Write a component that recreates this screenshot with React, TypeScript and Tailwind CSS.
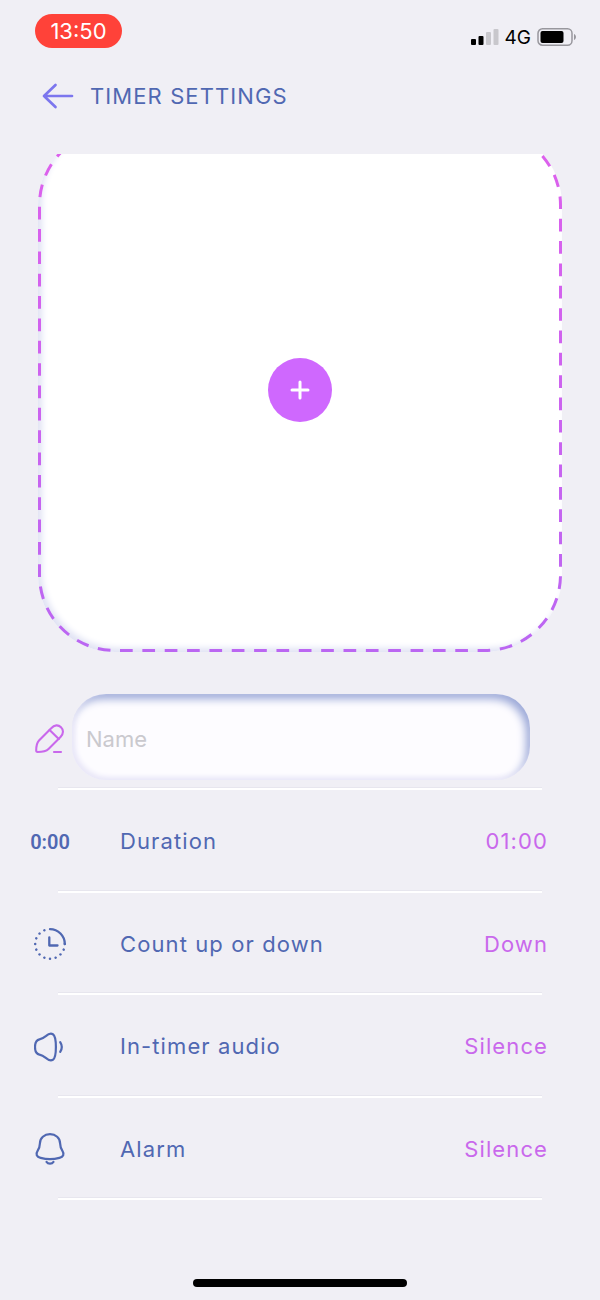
import React from 'react';

const DurationIcon = () => (
  <span className="font-['Roboto',sans-serif] text-xl font-semibold">0:00</span>
);

const CountIcon = () => (
  <svg className="size-8" viewBox="0 0 32 32" fill="none" stroke="currentColor" strokeLinecap="round">
    <path d="M16 1.2A14.8 14.8 0 0 1 30.8 16" strokeWidth="2.3" />
    <path
      d="M30.8 16A14.8 14.8 0 1 1 16 1.2"
      pathLength="120"
      strokeWidth="2.5"
      strokeDasharray="0.01 9.99"
      strokeDashoffset="-10"
    />
    <path d="M15.3 9.5v8h8.2" strokeWidth="2.3" strokeLinejoin="round" />
  </svg>
);

const AudioIcon = () => (
  <svg className="size-8" viewBox="0 0 32 32" fill="none" stroke="currentColor" strokeWidth="2.2" strokeLinecap="round">
    <path d="M5.5 8.4c2.6-.5 4.300-1.700 6.300-3.300C14 3.200 16.500 1.800 18.900 3.200c2.500 1.600 3 8.200 3 12.800s-.5 11.200-3 12.800c-2.400 1.400-4.900 0-7.100-1.900-2-1.600-3.700-2.800-6.300-3.300C1.900 22.700 1 20.500 1 16s.9-6.700 4.500-7.600Z" />
    <path d="M26.200 11.100c1.900 2.900 1.900 6.900 0 9.800" />
  </svg>
);

const AlarmIcon = () => (
  <svg className="size-8" viewBox="0 0 32 32" fill="none" stroke="currentColor" strokeWidth="2.2" strokeLinecap="round">
    <path d="M16 1.200C10.300 1.200 6 5 5.900 10.400c-.1 3.400-.6 4.700-2.200 7.200-2.400 3.700-1 6.300 2.900 7.300 5.800 1.600 13 1.600 18.800 0 3.900-1 5.300-3.600 2.900-7.300-1.600-2.500-2.100-3.800-2.200-7.200C26 5 21.700 1.200 16 1.200Z" />
    <path d="M12.500 28.900c1.500 2.300 5.500 2.300 7 0" />
  </svg>
);

const PencilIcon = () => (
  <svg
    className="size-8"
    viewBox="0 0 32 32"
    fill="none"
    stroke="currentColor"
    strokeWidth="2.1"
    strokeLinecap="round"
    strokeLinejoin="round"
  >
    <path d="M3.600 29c-1 0-1.400-.5-1.400-1.500 0-3.500.5-7.500 2.800-10L17.200 5.200c3.200-3.600 7.200-3.500 9.800-1s2.800 6.500-.5 9.800L14.500 26c-2.500 2.500-6.800 3-10.900 3Z" />
    <path d="M15.600 7l9.200 9" />
    <path d="M20 29h7" />
  </svg>
);

const settings = [
  { label: 'Duration', value: '01:00', icon: DurationIcon },
  { label: 'Count up or down', value: 'Down', icon: CountIcon },
  { label: 'In-timer audio', value: 'Silence', icon: AudioIcon },
  { label: 'Alarm', value: 'Silence', icon: AlarmIcon },
];

const StatusBar = () => (
  <div className="flex items-start justify-between pl-[35px] pr-[23px] pt-3.5">
    <div className="flex h-[34px] w-[87px] items-center justify-center rounded-full bg-[#ff4239] text-[22px] leading-none text-white">
      13:50
    </div>
    <div className="mt-[11px] flex h-6 items-center gap-1.5 text-black">
      <svg className="h-4 w-7" viewBox="0 0 28 16">
        <rect x="0" y="10" width="5" height="6" rx="1" />
        <rect x="7.5" y="7" width="5" height="9" rx="1" />
        <rect x="15" y="3" width="5" height="13" rx="1" fill="#c8c7cc" />
        <rect x="22.5" y="0" width="5" height="16" rx="1" fill="#c8c7cc" />
      </svg>
      <span className="text-[19px] leading-none">4G</span>
      <svg className="h-[18px] w-10" viewBox="0 0 40 18">
        <rect x="1" y="0.8" width="34" height="16.4" rx="4.5" fill="none" stroke="#98979d" strokeWidth="1.5" />
        <rect x="3.5" y="3" width="23" height="12" rx="2" />
        <path d="M37 6c2.600 1 2.600 5 0 6Z" fill="#98979d" />
      </svg>
    </div>
  </div>
);

const ImagePicker = () => (
  <div className="overflow-hidden px-[38px]">
    <div className="relative -mt-[26px] flex aspect-square items-center justify-center rounded-[77px] bg-white shadow-[inset_4px_-4px_6px_#e1e3f4]">
      <svg className="absolute inset-0 size-full" fill="none">
        <defs>
          <linearGradient id="dash" x1="0" y1="0" x2="0" y2="1">
            <stop offset="0" stopColor="#de60ec" />
            <stop offset="1" stopColor="#bb66f2" />
          </linearGradient>
        </defs>
        <rect
          className="h-[calc(100%-3px)] w-[calc(100%-3px)]"
          x="1.5"
          y="1.5"
          rx="75.5"
          stroke="url(#dash)"
          strokeWidth="3"
          strokeDasharray="12.7 9.65"
          strokeDashoffset="-10.45"
        />
      </svg>
      <button
        type="button"
        aria-label="Add image"
        className="relative flex size-16 items-center justify-center rounded-full bg-[#cf68fe]"
      >
        <svg className="size-5" viewBox="0 0 20 20" stroke="white" strokeWidth="3" strokeLinecap="round">
          <path d="M10 2v16M2 10h16" />
        </svg>
      </button>
    </div>
  </div>
);

const Divider = () => <div className="mx-[58px] h-[3px] border-t border-[#e7e6ee] bg-white" />;

const App = () => {
  return (
    <div className="flex min-h-screen flex-col bg-[#f0eff5] font-['Inter',sans-serif] text-[22px] text-[#5068b2]">
      <StatusBar />
      <header className="mb-[38px] mt-[27px] flex h-10 items-center gap-4 pl-[42px]">
        <button type="button" aria-label="Back" className="text-[#7c76ee]">
          <svg
            className="size-8"
            viewBox="0 0 32 32"
            fill="none"
            stroke="currentColor"
            strokeWidth="2.7"
            strokeLinecap="round"
            strokeLinejoin="round"
          >
            <path d="M13.500 5L2 16l11.500 11M2 16h28" />
          </svg>
        </button>
        <h1 className="tracking-wider">TIMER SETTINGS</h1>
      </header>
      <main className="flex flex-1 flex-col">
        <ImagePicker />
        <div className="mb-[7px] mt-[42px] flex items-center gap-1.5 pl-[34px] pr-[70px]">
          <label htmlFor="name" aria-label="Name" className="pt-1 text-[#c968ec]">
            <PencilIcon />
          </label>
          <input
            id="name"
            type="text"
            placeholder="Name"
            className="h-[86px] min-w-0 flex-1 rounded-[34px] bg-[#fdfcff] px-3.5 pt-1 shadow-[inset_3px_-3px_5px_#eae8f8,inset_-4px_5px_8px_#9ca9d8] outline-none placeholder:text-[#cac9ce]"
          />
        </div>
        <Divider />
        <ul className="grid flex-1 auto-rows-fr">
          {settings.map((item) => (
            <li key={item.label} className="flex flex-col">
              <button type="button" className="flex flex-1 items-center pl-[25px] pr-[52px] pt-1 text-left tracking-wider">
                <span className="flex w-[50px] flex-shrink-0 justify-center tracking-normal">
                  <item.icon />
                </span>
                <span className="ml-[45px] flex-1">{item.label}</span>
                <span className="text-[#c968ec]">{item.value}</span>
              </button>
              <Divider />
            </li>
          ))}
        </ul>
      </main>
      <footer className="flex h-[100px] items-end justify-center pb-[13px]">
        <div className="h-2 w-[214px] rounded-full bg-black" />
      </footer>
    </div>
  );
};

export default App;
